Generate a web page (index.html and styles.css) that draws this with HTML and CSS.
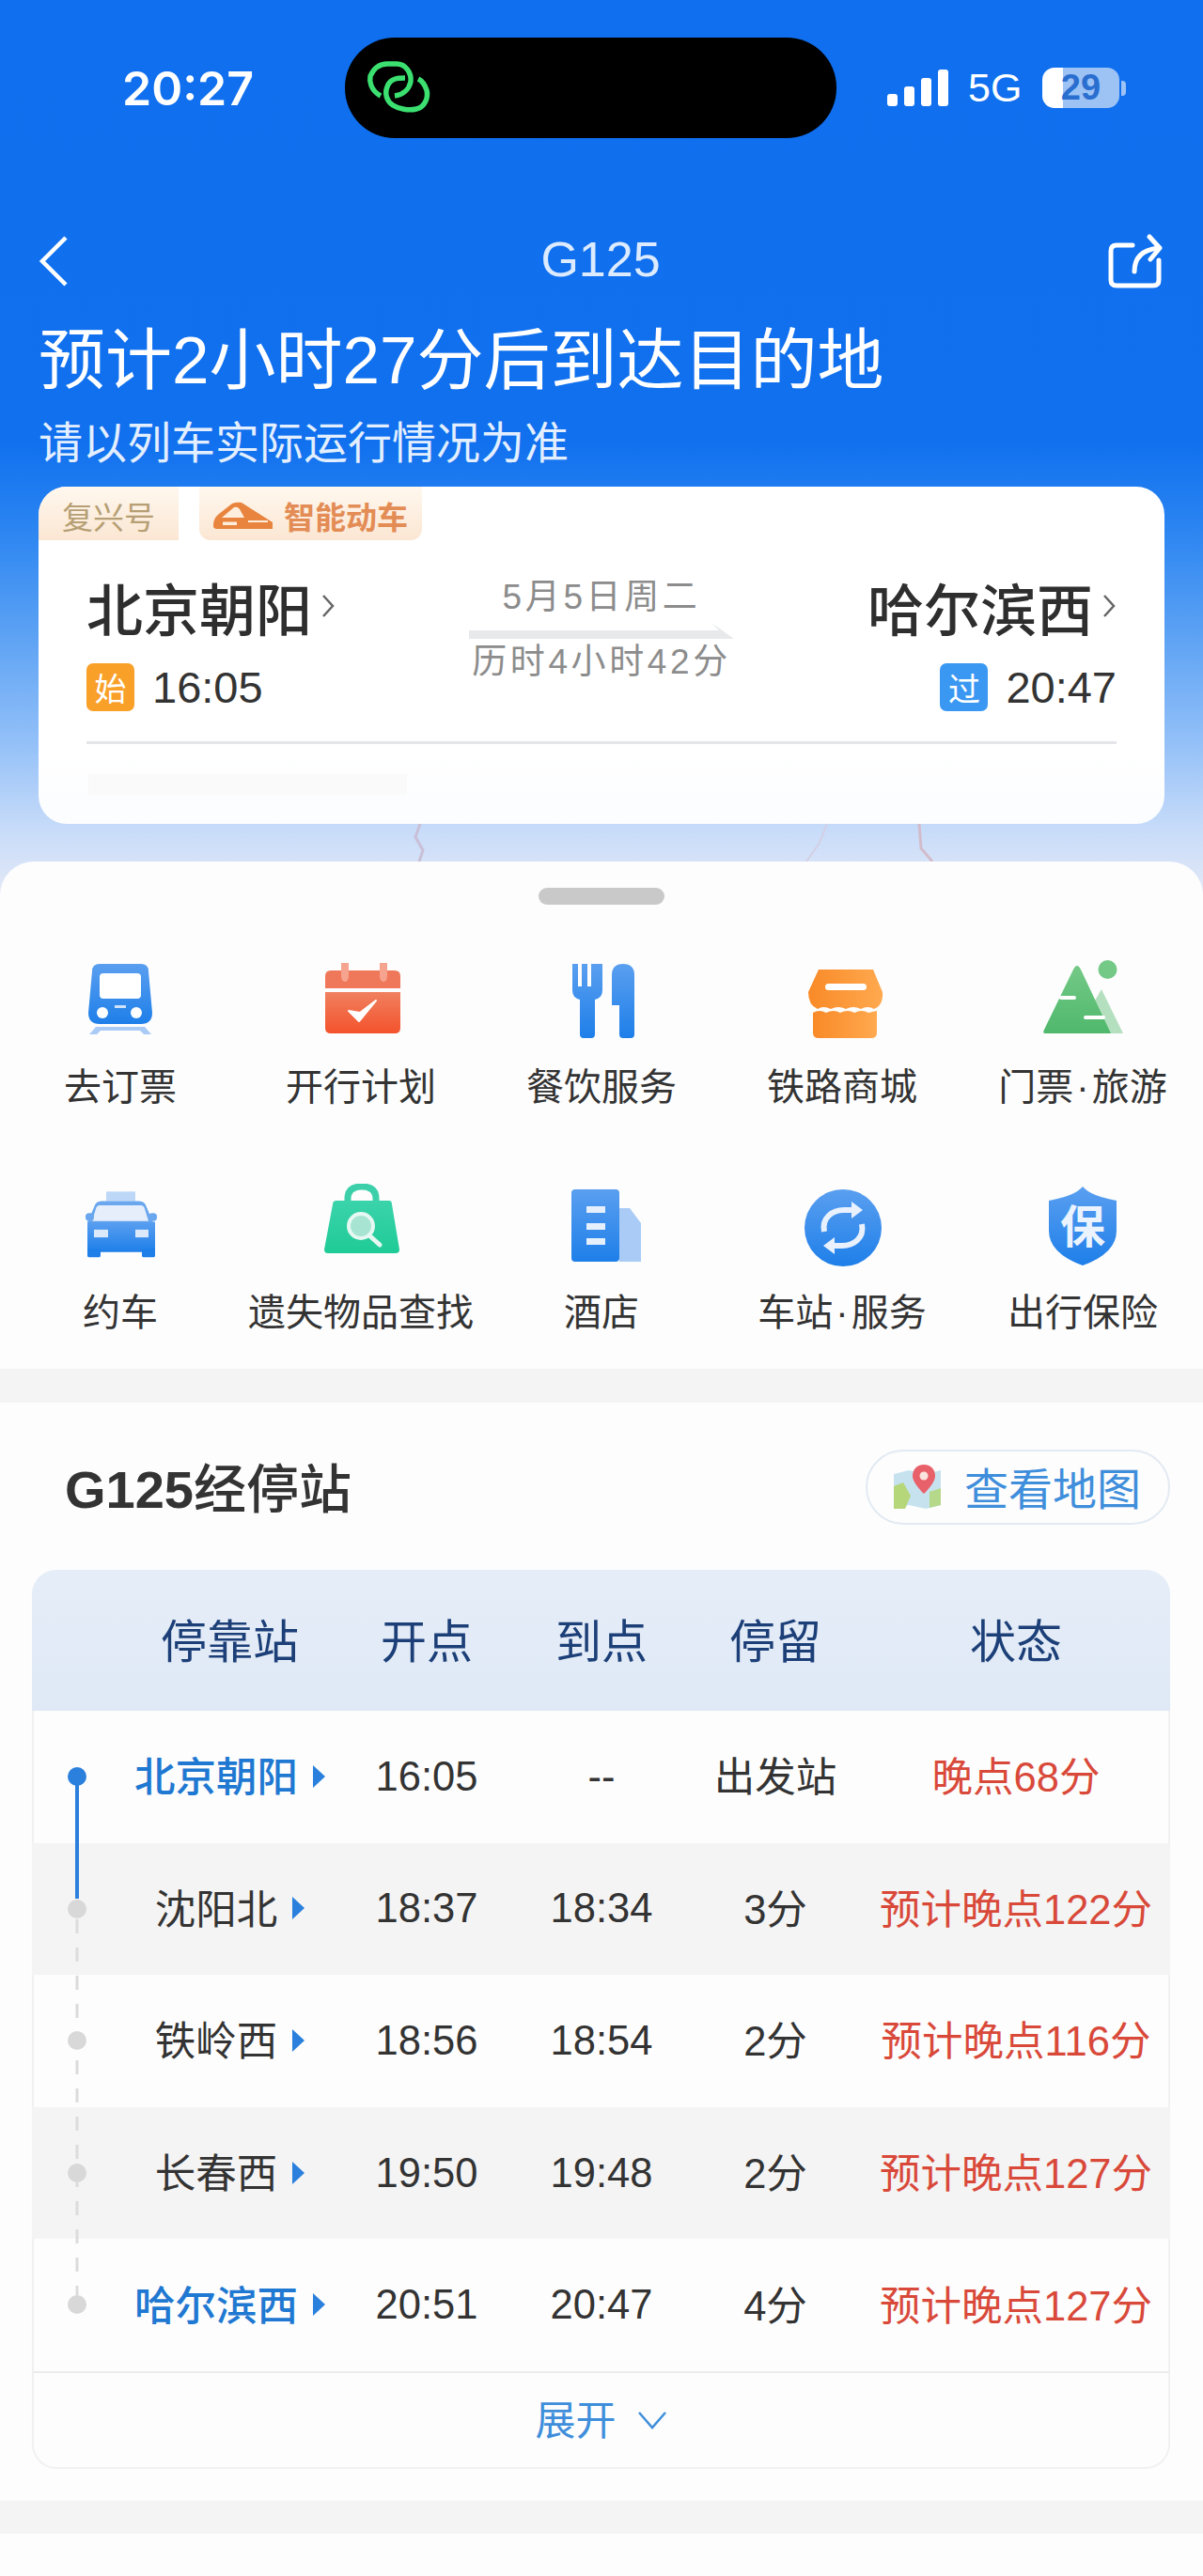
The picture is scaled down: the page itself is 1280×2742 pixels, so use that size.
FILE: index.html
```html
<!DOCTYPE html>
<html lang="zh-CN">

  <head>
    <title>G125</title>
    <meta charset="utf-8">
    <!-- CSS -->
    <link rel="stylesheet" href="styles.css">
  </head>

  <body>
    <svg class="defs">
      <defs>
        <linearGradient id="gBlue" x1="0" y1="0" x2="0" y2="1"><stop offset="0" stop-color="#5a9ff0"/><stop offset="1" stop-color="#1e7fe9"/></linearGradient>
        <linearGradient id="gRed" x1="0" y1="0" x2="0" y2="1"><stop offset="0" stop-color="#f0805f"/><stop offset="1" stop-color="#f4522c"/></linearGradient>
        <linearGradient id="gOrange" x1="0" y1="0" x2="1" y2="0"><stop offset="0" stop-color="#f98a28"/><stop offset="1" stop-color="#ffa94f"/></linearGradient>
        <linearGradient id="gGreen" x1="0" y1="0" x2="0" y2="1"><stop offset="0" stop-color="#74c986"/><stop offset="1" stop-color="#4fb86c"/></linearGradient>
        <linearGradient id="gTeal" x1="0" y1="0" x2="0" y2="1"><stop offset="0" stop-color="#3bd3ab"/><stop offset="1" stop-color="#1fcb96"/></linearGradient>
      </defs>
    </svg>

    <div class="hero">
      <svg class="mapLines" width="1280" height="60" viewBox="0 0 1280 60">
        <path d="M447 0 L442 14 L450 28 L446 40" fill="none" stroke="#c9bfd6" stroke-width="3"/>
        <path d="M880 0 L872 20 L858 40" fill="none" stroke="#d3cfe4" stroke-width="2"/>
        <path d="M978 0 L980 26 L992 40" fill="none" stroke="#d2bccb" stroke-width="3"/>
      </svg>

      <div class="status">
        <div class="clock">20:27</div>
        <div class="island">
          <svg width="90" height="80" viewBox="0 0 90 80" fill="none" stroke="#3be070" stroke-width="5.5">
            <path d="M25 48 C14 42 13 32 14 27 C18 18 25 14 32 14 H42 C52 14 58 24 57 33 C55 42 48 47 40 48"/>
            <path d="M51 29 C42 29 36 30 33 36 C28 46 32 54 38 58 C44 62 55 64 63 62 C72 60 76 50 74 42 C72 36 69 32 65 30"/>
          </svg>
        </div>
        <div class="statusRight">
          <div class="signal"><span class="b1"></span><span class="b2"></span><span class="b3"></span><span class="b4"></span></div>
          <div class="net">5G</div>
          <div class="battery">29</div>
          <div class="batteryCap"></div>
        </div>
      </div>

      <div class="nav">
        <svg width="32" height="54" viewBox="0 0 32 54" fill="none" stroke="#fff" stroke-width="4.5"><path d="M29 2 L4 27 L29 52"/></svg>
        <div class="navTitle">G125</div>
        <svg class="navShare" width="58" height="58" viewBox="0 0 58 58" fill="none" stroke="#fff" stroke-width="5" stroke-linecap="round" stroke-linejoin="round">
          <path d="M26 12 H9 Q3 12 3 18 V49 Q3 55 9 55 H48 Q54 55 54 49 V28"/>
          <path d="M28 40 C28 26 36 17 53 15"/>
          <path d="M44 3 L55 15 L45 27"/>
        </svg>
      </div>

      <h1 class="headline">预计2小时27分后到达目的地</h1>
      <div class="subline">请以列车实际运行情况为准</div>

      <div class="trainCard">
        <div class="tags">
          <div class="tag tagPlain">复兴号</div>
          <div class="tag tagSmart">
            <svg width="64" height="30" viewBox="0 0 64 30">
              <path d="M0 26 C0 20 2 16 6 13 L20 2 Q25 0 30 1 L63 22 V29 H4 Q0 29 0 26 Z" fill="#e8843e"/>
              <path d="M9 17 L22 6 Q26 5 28 8 L33 17 Z" fill="#fdeede"/>
              <rect x="10" y="21.5" width="15" height="3.5" fill="#fdeede"/>
              <path d="M37 21 H58" stroke="#fdeede" stroke-width="2"/>
            </svg>
            <span>智能动车</span>
          </div>
        </div>

        <div class="route">
          <div class="stop">
            <div class="stopName">北京朝阳<svg class="chev" width="16" height="26" viewBox="0 0 16 26" fill="none" stroke="#666" stroke-width="2.5"><path d="M3 2 L13 13 L3 24"/></svg></div>
            <div class="stopTime"><span class="mark markStart">始</span>16:05</div>
          </div>
          <div class="middle">
            <div class="midText">5月5日周二</div>
            <svg class="midArrow" width="282" height="17" viewBox="0 0 282 17"><path d="M0 8 H266 L258 0 L282 17 H0 Z" fill="#e8e9eb"/></svg>
            <div class="midText">历时4小时42分</div>
          </div>
          <div class="stop stopEnd">
            <div class="stopName">哈尔滨西<svg class="chev" width="16" height="26" viewBox="0 0 16 26" fill="none" stroke="#666" stroke-width="2.5"><path d="M3 2 L13 13 L3 24"/></svg></div>
            <div class="stopTime"><span class="mark markPass">过</span>20:47</div>
          </div>
        </div>

        <div class="cardLine"></div>
        <div class="fadeBar"></div>
      </div>
    </div>

    <div class="sheet">
      <div class="handle"></div>
      <div class="menu">
        <div class="menuItem">
          <svg class="menuIcon" viewBox="0 0 100 100">
            <path d="M28 6 H72 Q80 6 80 14 L84 58 Q84 70 72 70 H28 Q16 70 16 58 L20 14 Q20 6 28 6 Z" fill="url(#gBlue)"/>
            <rect x="28" y="16" width="44" height="27" rx="4" fill="#fff"/>
            <circle cx="31" cy="58" r="6" fill="#fff"/><circle cx="67" cy="58" r="6" fill="#fff"/>
            <rect x="44" y="50" width="12" height="3" fill="#cfe2fa"/>
            <path d="M24 73 H76 L83 81 H75 L71 77 H29 L25 81 H17 Z" fill="#a9cbf6"/>
          </svg>
          <div class="menuLabel">去订票</div>
        </div>
        <div class="menuItem">
          <svg class="menuIcon" viewBox="0 0 100 100">
            <path d="M18 13 H86 Q92 13 92 19 V32 H12 V19 Q12 13 18 13 Z" fill="#f0785a"/>
            <path d="M12 36 H92 V74 Q92 80 86 80 H18 Q12 80 12 74 Z" fill="url(#gRed)"/>
            <path d="M29 5 V18 Q29 25 33 25 Q37 25 37 18 V5" fill="#f6a48f"/>
            <path d="M70 5 V18 Q70 25 74 25 Q78 25 78 18 V5" fill="#f6a48f"/>
            <path d="M37 56 L48 67 L66 45 L49 58 Z" fill="#fff" stroke="#fff" stroke-width="2" stroke-linejoin="round"/>
          </svg>
          <div class="menuLabel">开行计划</div>
        </div>
        <div class="menuItem">
          <svg class="menuIcon" viewBox="0 0 100 100">
            <path d="M19 6 H25 V30 H29 V6 H35 V30 H39 V6 H45 V6 H51 V34 Q51 42 43 44 V81 Q43 85 39 85 H31 Q27 85 27 81 V44 Q19 42 19 34 Z" fill="url(#gBlue)"/>
            <path d="M61 18 Q61 6 73 6 Q85 6 85 18 V81 Q85 85 81 85 H73 Q69 85 69 81 V50 H61 Z" fill="url(#gBlue)"/>
          </svg>
          <div class="menuLabel">餐饮服务</div>
        </div>
        <div class="menuItem">
          <svg class="menuIcon" viewBox="0 0 100 100">
            <path d="M25 12 H83 L93 36 Q94 50 84 54 Q77 50 70 54 Q62 50 54 54 Q46 50 38 54 Q30 50 24 54 Q14 50 14 36 Z" fill="url(#gOrange)"/>
            <path d="M19 58 Q26 54 33 58 Q41 54 48 58 Q56 54 63 58 Q71 54 78 58 L87 56 V79 Q87 85 81 85 H25 Q19 85 19 79 Z" fill="url(#gOrange)"/>
            <rect x="32" y="27" width="44" height="7" rx="3.5" fill="#fff"/>
          </svg>
          <div class="menuLabel">铁路商城</div>
        </div>
        <div class="menuItem">
          <svg class="menuIcon" viewBox="0 0 100 100">
            <path d="M70 33 L93 80 H66 L60 50 Z" fill="#b5e0c0"/>
            <path d="M44 8 Q46 8 48 12 L80 80 H10 Q7 80 9 76 L40 12 Q42 8 44 8 Z" fill="url(#gGreen)"/>
            <circle cx="76.5" cy="12" r="10" fill="#74c986"/>
            <rect x="25" y="40" width="18" height="4" rx="2" fill="#fff"/>
            <rect x="51" y="61" width="23" height="4" rx="2" fill="#fff"/>
          </svg>
          <div class="menuLabel">门票<span class="dot">·</span>旅游</div>
        </div>

        <div class="menuItem">
          <svg class="menuIcon" viewBox="0 0 100 100">
            <g transform="translate(0 1) scale(1 .92)">
              <rect x="35" y="8" width="31" height="11" fill="#bdd7f8"/>
              <path d="M30 19 H70 Q76 19 78 26 L85 44 H15 L22 26 Q24 19 30 19 Z" fill="#6aa7ee"/>
              <path d="M28 24 H72 Q75 24 76 28 L80 42 H20 L24 28 Q25 24 28 24 Z" fill="#e6eefb"/>
              <rect x="13" y="33" width="9" height="9" rx="4" fill="#6aa7ee"/><rect x="80" y="33" width="9" height="9" rx="4" fill="#6aa7ee"/>
              <path d="M15 43 H87 V78 H15 Z" fill="url(#gBlue)"/>
              <rect x="15" y="74" width="14" height="10" rx="2" fill="#1e7fe9"/><rect x="73" y="74" width="14" height="10" rx="2" fill="#1e7fe9"/>
              <rect x="22" y="52" width="15" height="9" fill="#dbe9fb"/><rect x="66" y="52" width="14" height="9" fill="#dbe9fb"/>
            </g>
          </svg>
          <div class="menuLabel">约车</div>
        </div>
        <div class="menuItem">
          <svg class="menuIcon" viewBox="0 0 100 100">
            <path d="M36 20 V16 Q36 3 51 3 Q66 3 66 16 V20" fill="none" stroke="#3cd0aa" stroke-width="7"/>
            <path d="M24 18 H80 Q83 18 83 22 L91 70 Q91 74 87 74 H15 Q11 74 11 70 L20 22 Q20 18 24 18 Z" fill="url(#gTeal)"/>
            <circle cx="50" cy="45" r="13" fill="#a7e4d2" stroke="#e6f8f2" stroke-width="4"/>
            <path d="M60 56 L70 65" stroke="#e6f8f2" stroke-width="5" stroke-linecap="round"/>
          </svg>
          <div class="menuLabel">遗失物品查找</div>
        </div>
        <div class="menuItem">
          <svg class="menuIcon" viewBox="0 0 100 100">
            <path d="M69 26 L80 26 L92 42 V83 H69 Z" fill="#a9cbf6"/>
            <rect x="18" y="6" width="51" height="77" rx="4" fill="url(#gBlue)"/>
            <rect x="34" y="24" width="20" height="7" fill="#e6f0fd"/>
            <rect x="34" y="42" width="20" height="7" fill="#e6f0fd"/>
            <rect x="34" y="58" width="20" height="7" fill="#e6f0fd"/>
          </svg>
          <div class="menuLabel">酒店</div>
        </div>
        <div class="menuItem">
          <svg class="menuIcon" viewBox="0 0 100 100">
            <circle cx="51" cy="47" r="41" fill="url(#gBlue)"/>
            <path d="M31 51 C28 36 40 28 52 28 L62 28" fill="none" stroke="#e8f1fd" stroke-width="6"/>
            <path d="M60 19 L72 28 L60 37 Z" fill="#e8f1fd"/>
            <path d="M71 43 C74 58 62 66 50 66 L40 66" fill="none" stroke="#e8f1fd" stroke-width="6"/>
            <path d="M42 57 L30 66 L42 75 Z" fill="#e8f1fd"/>
          </svg>
          <div class="menuLabel">车站<span class="dot">·</span>服务</div>
        </div>
        <div class="menuItem">
          <svg class="menuIcon" viewBox="0 0 100 100">
            <path d="M50 3 Q58 13 86 18 V50 Q86 74 50 87 Q14 74 14 50 V18 Q42 13 50 3 Z" fill="url(#gBlue)"/>
            <text x="50" y="63" text-anchor="middle" class="shieldText">保</text>
          </svg>
          <div class="menuLabel">出行保险</div>
        </div>
      </div>
    </div>

    <div class="band"></div>

    <div class="stops">
      <div class="stopsHead">
        <div class="stopsTitle"><b>G125</b>经停站</div>
        <div class="mapBtn">
          <svg width="50" height="50" viewBox="0 0 50 50">
            <path d="M0 11 L16 7 L34 11 L50 7 V44 L34 48 L16 44 L0 48 Z" fill="#c6e2ef"/>
            <path d="M0 24 L10 20 L18 34 L12 48 L0 48 Z" fill="#b6d67a"/>
            <path d="M38 30 L50 26 V44 L38 47 Z" fill="#b6d88a"/>
            <path d="M32 1 C24 1 20 7 20 13 C20 21 32 32 32 32 C32 32 44 21 44 13 C44 7 40 1 32 1 Z" fill="#e8606a"/>
            <circle cx="32" cy="13" r="4.5" fill="#fbe3dd"/>
          </svg>
          <span>查看地图</span>
        </div>
      </div>

      <div class="stopTable">
        <div class="row rowHead">
          <div class="cellName">停靠站</div><div>开点</div><div>到点</div><div>停留</div><div>状态</div>
        </div>
        <div class="rows">
          <div class="row">
            <div class="cellName nameBlue">北京朝阳<i class="caret"></i></div><div>16:05</div><div>--</div><div class="cjk">出发站</div><div class="late">晚点68分</div>
          </div>
          <div class="row rowGrey">
            <div class="cellName">沈阳北<i class="caret"></i></div><div>18:37</div><div>18:34</div><div class="cjk">3分</div><div class="late">预计晚点122分</div>
          </div>
          <div class="row">
            <div class="cellName">铁岭西<i class="caret"></i></div><div>18:56</div><div>18:54</div><div class="cjk">2分</div><div class="late">预计晚点116分</div>
          </div>
          <div class="row rowGrey">
            <div class="cellName">长春西<i class="caret"></i></div><div>19:50</div><div>19:48</div><div class="cjk">2分</div><div class="late">预计晚点127分</div>
          </div>
          <div class="row">
            <div class="cellName nameBlue">哈尔滨西<i class="caret"></i></div><div>20:51</div><div>20:47</div><div class="cjk">4分</div><div class="late">预计晚点127分</div>
          </div>
          <svg class="timeline" width="100" height="703" viewBox="0 0 100 703">
            <path d="M48 70 V200" stroke="#2a80dc" stroke-width="4"/>
            <path d="M48 222 V622" stroke="#dcdcdc" stroke-width="3" stroke-dasharray="15 15"/>
            <circle cx="48" cy="70" r="10" fill="#2a80dc"/>
            <circle cx="48" cy="211" r="10" fill="#d8d8d8"/>
            <circle cx="48" cy="351" r="10" fill="#d8d8d8"/>
            <circle cx="48" cy="492" r="10" fill="#d8d8d8"/>
            <circle cx="48" cy="632" r="10" fill="#d8d8d8"/>
          </svg>
        </div>
        <div class="more">
          <span>展开</span>
          <svg width="32" height="20" viewBox="0 0 32 20" fill="none" stroke="#3f8edb" stroke-width="2.5"><path d="M2 2 L16 18 L30 2"/></svg>
        </div>
      </div>
    </div>

    <div class="band bandLast"></div>
  </body>
</html>
```

FILE: styles.css
```css
* {
  box-sizing: border-box;
}
html, body {
  margin: 0;
  padding: 0;
}
body {
  width: 1280px;
  height: 2742px;
  overflow: hidden;
  background-color: #fdfdfd;
  font-family: "Liberation Sans", "Noto Sans CJK SC", sans-serif;
  color: #333;
}
.defs {
  display: block;
  width: 0;
  height: 0;
}

/* top blue area */
.hero {
  position: relative;
  height: 953px;
  padding-top: 40px;
  background: linear-gradient(180deg, #0f6fee 0, #1070ee 470px, #2a84f1 560px, #5ea3f4 680px, #93c0f8 790px, #c6dbf9 880px, #e4e9f7 953px);
  color: #fff;
}
.mapLines {
  position: absolute;
  left: 0;
  top: 877px;
}
.status {
  display: grid;
  grid-template-columns: 367px 523px 1fr;
  height: 107px;
  align-items: center;
}
.clock {
  padding-left: 130px;
  font-family: Inter, sans-serif;
  font-size: 50px;
  font-weight: 600;
}
.island {
  display: flex;
  align-items: center;
  height: 107px;
  padding-left: 13px;
  background-color: #000;
  border-radius: 53px;
}
.statusRight {
  display: flex;
  align-items: center;
  padding-left: 54px;
}
.signal {
  display: flex;
  align-items: flex-end;
  gap: 7px;
  height: 39px;
}
.signal span {
  display: block;
  width: 11px;
  background-color: #fff;
  border-radius: 3px;
}
.b1 { height: 13px; }
.b2 { height: 21px; }
.b3 { height: 30px; }
.b4 { height: 39px; }
.net {
  margin-left: 21px;
  width: 79px;
  font-size: 43px;
}
.battery {
  width: 82px;
  height: 43px;
  text-align: center;
  line-height: 43px;
  font-size: 38px;
  font-weight: 700;
  color: #2a6fd0;
  border-radius: 13px;
  background: linear-gradient(90deg, #fff 0, #fff 27%, #9dc3f5 27%);
}
.batteryCap {
  width: 5px;
  height: 16px;
  margin-left: 2px;
  background-color: #9dc3f5;
  border-radius: 0 4px 4px 0;
}
.nav {
  display: grid;
  grid-template-columns: 1fr auto 1fr;
  align-items: center;
  height: 58px;
  margin-top: 99px;
  padding: 0 43px 0 41px;
}
.navTitle {
  padding-bottom: 3px;
  font-size: 52px;
  color: #dcebff;
}
.navShare {
  justify-self: end;
}
.headline {
  margin: 40px 0 0;
  padding-left: 41px;
  font-size: 71px;
  font-weight: 400;
  line-height: 80px;
  white-space: nowrap;
}
.subline {
  margin-top: 20px;
  padding-left: 41px;
  font-size: 47px;
  line-height: 56px;
  color: #e3efff;
}

/* white train card */
.trainCard {
  margin: 18px 41px 0;
  height: 359px;
  overflow: hidden;
  background: linear-gradient(180deg, #fff 0, #fff 80%, rgba(255, 255, 255, 0.94) 100%);
  border-radius: 30px;
  color: #333;
}
.tags {
  display: flex;
  gap: 22px;
  height: 57px;
}
.tag {
  display: flex;
  align-items: center;
  justify-content: center;
  padding-top: 4px;
  background: linear-gradient(180deg, #fff8ef, #fbe6d2);
}
.tagPlain {
  width: 149px;
  font-size: 33px;
  color: #b69f74;
}
.tagSmart {
  width: 237px;
  gap: 11px;
  font-size: 33px;
  font-weight: 700;
  color: #e38c55;
  border-radius: 0 0 12px 12px;
}
.route {
  display: grid;
  grid-template-columns: 1fr 282px 1fr;
  margin-top: 40px;
  padding: 0 51px;
}
.stopName {
  display: flex;
  align-items: center;
  height: 70px;
  padding-bottom: 10px;
  font-size: 60px;
  font-weight: 500;
  color: #2e2e2e;
}
.stopEnd .stopName,
.stopEnd .stopTime {
  justify-content: flex-end;
}
.chev {
  margin-left: 9px;
}
.stopTime {
  display: flex;
  align-items: center;
  gap: 19px;
  margin-top: 19px;
  font-size: 47px;
  color: #333;
}
.mark {
  display: flex;
  align-items: center;
  justify-content: center;
  width: 51px;
  height: 51px;
  font-size: 34px;
  color: #fff;
  border-radius: 7px;
}
.markStart {
  background-color: #f9a029;
}
.markPass {
  background-color: #3b98f2;
}
.middle {
  text-align: center;
  white-space: nowrap;
}
.midText {
  height: 42px;
  font-size: 37px;
  line-height: 42px;
  letter-spacing: 3.6px;
  color: #8c8c8c;
}
.midArrow {
  display: block;
  margin-top: 6px;
  margin-bottom: 4px;
}
.cardLine {
  height: 3px;
  margin: 30px 51px 0;
  background-color: #e4e6ea;
}
.fadeBar {
  width: 339px;
  height: 22px;
  margin: 32px 0 0 53px;
  background-color: #fafafa;
}

/* sheet with the menu */
.sheet {
  position: relative;
  margin-top: -36px;
  height: 540px;
  padding-top: 28px;
  background-color: #fdfdfd;
  border-radius: 36px 36px 0 0;
}
.handle {
  width: 134px;
  height: 18px;
  margin: 0 auto;
  background-color: #c9c9c9;
  border-radius: 9px;
}
.menu {
  display: grid;
  grid-template-columns: repeat(5, 256px);
  row-gap: 79px;
  margin-top: 57px;
}
.menuItem {
  display: flex;
  flex-direction: column;
  align-items: center;
}
.menuIcon {
  display: block;
  width: 100px;
  height: 100px;
}
.shieldText {
  font-size: 48px;
  font-weight: 700;
  font-family: "Noto Sans CJK SC", sans-serif;
  fill: #eaf3fe;
}
.menuLabel {
  margin-top: 13px;
  font-size: 40px;
  line-height: 48px;
  color: #333;
  white-space: nowrap;
}
.dot {
  margin: 0 3px;
}
.band {
  height: 36px;
  background-color: #f4f4f4;
}
.bandLast {
  height: 35px;
  margin-top: 34px;
}

/* stop list */
.stopsHead {
  display: flex;
  justify-content: space-between;
  align-items: center;
  height: 80px;
  margin-top: 50px;
  padding: 0 35px 0 69px;
}
.stopsTitle {
  padding-bottom: 6px;
  font-size: 56px;
  font-weight: 500;
  color: #333;
}
.mapBtn {
  display: flex;
  align-items: center;
  width: 324px;
  height: 80px;
  padding-left: 28px;
  gap: 25px;
  font-size: 47px;
  color: #3f8edb;
  border: 2px solid #e3eaf3;
  border-radius: 40px;
}
.mapBtn span {
  padding-bottom: 4px;
}
.stopTable {
  margin: 48px 35px 0 34px;
}
.row {
  display: grid;
  grid-template-columns: 327px 186px 186px 184px 328px;
  align-items: center;
  height: 140.6px;
  font-size: 43.5px;
  color: #333;
  text-align: center;
  white-space: nowrap;
}
.rowHead {
  height: 150px;
  font-size: 49px;
  color: #1c3f78;
  background: linear-gradient(180deg, #e5edf8, #dfe9f5);
  border-radius: 26px 26px 0 0;
}
.rowHead div {
  padding-bottom: 6px;
}
.rowGrey {
  background-color: #f4f4f4;
}
.rows {
  position: relative;
  box-shadow: inset 2px 0 0 #f1f1f1, inset -2px 0 0 #f1f1f1;
}
.timeline {
  position: absolute;
  left: 0;
  top: 0;
}
.cellName {
  display: flex;
  align-items: center;
  justify-content: center;
  padding-left: 94px;
  padding-bottom: 5px;
}
.cjk,
.late {
  padding-bottom: 5px;
}
.nameBlue {
  color: #1f78d1;
  font-weight: 500;
}
.caret {
  display: block;
  margin: 4px 0 0 16px;
  width: 0;
  height: 0;
  border-left: 13px solid #2a80dc;
  border-top: 12px solid transparent;
  border-bottom: 12px solid transparent;
}
.late {
  color: #d9493a;
}
.more {
  display: flex;
  align-items: center;
  justify-content: center;
  gap: 22px;
  height: 104px;
  font-size: 43px;
  color: #3f8edb;
  border: 2px solid #f1f1f1;
  border-top-color: #ececec;
  border-radius: 0 0 26px 26px;
}
.more span {
  padding-bottom: 5px;
}
```
